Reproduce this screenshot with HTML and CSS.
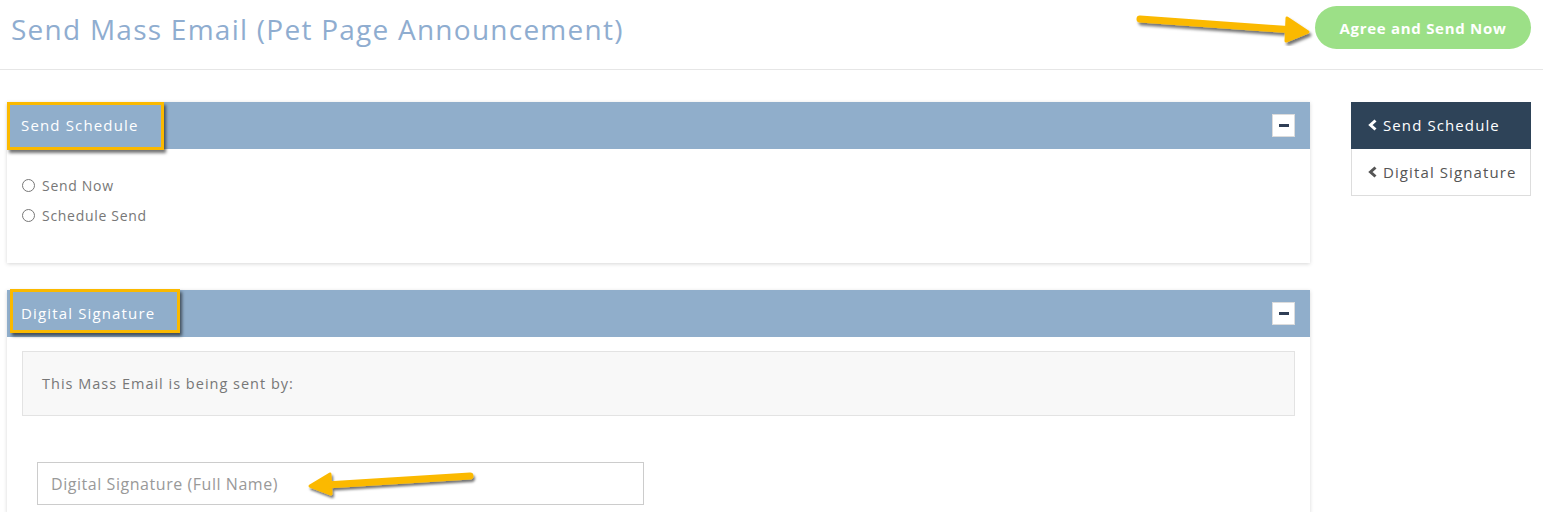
FILE: index.html
```html
<!DOCTYPE html>
<html>
<head>
<meta charset="utf-8">
<link rel="stylesheet" href="styles.css">
</head>
<body>
<header class="topbar">
  <h1 class="title">Send Mass Email (Pet Page Announcement)</h1>
  <button class="agree-btn">Agree and Send Now</button>
  <svg class="arrow arrow-top" width="190" height="40" viewBox="0 0 190 40">
    <defs>
      <filter id="sh1" x="-10%" y="-30%" width="130%" height="180%">
        <feDropShadow dx="2" dy="3" stdDeviation="1.5" flood-color="#000" flood-opacity="0.55"/>
      </filter>
    </defs>
    <g filter="url(#sh1)">
      <line x1="10" y1="13" x2="165" y2="24" stroke="#fbb900" stroke-width="7" stroke-linecap="round"/>
      <path d="M157 12 L178 26 L156 35 Z" fill="#fbb900" stroke="#fbb900" stroke-width="3" stroke-linejoin="round"/>
    </g>
  </svg>
</header>

<main class="layout">
  <section class="panels">
    <div class="panel">
      <div class="panel-head">
        <span class="panel-title">Send Schedule</span>
        <span class="collapse"><span class="dash"></span></span>
        <span class="hl hl-1"></span>
      </div>
      <div class="panel-body body-1">
        <label class="radio-row"><span class="radio"></span>Send Now</label>
        <label class="radio-row"><span class="radio"></span>Schedule Send</label>
      </div>
    </div>

    <div class="panel">
      <div class="panel-head">
        <span class="panel-title">Digital Signature</span>
        <span class="collapse"><span class="dash"></span></span>
        <span class="hl hl-2"></span>
      </div>
      <div class="panel-body body-2">
        <div class="well">This Mass Email is being sent by:</div>
        <div class="input-wrap">
          <div class="sig-input">Digital Signature (Full Name)</div>
          <svg class="arrow arrow-left" width="185" height="34" viewBox="0 0 185 34">
            <defs>
              <filter id="sh2" x="-10%" y="-30%" width="130%" height="180%">
                <feDropShadow dx="1.5" dy="2.5" stdDeviation="1.2" flood-color="#000" flood-opacity="0.55"/>
              </filter>
            </defs>
            <g filter="url(#sh2)">
              <line x1="170" y1="10" x2="26" y2="19" stroke="#fbb900" stroke-width="7" stroke-linecap="round"/>
              <path d="M30 8 L10 20 L31 28 Z" fill="#fbb900" stroke="#fbb900" stroke-width="3" stroke-linejoin="round"/>
            </g>
          </svg>
        </div>
      </div>
    </div>
  </section>

  <nav class="side-nav">
    <a class="nav-item active">
      <svg class="chev" width="10" height="12" viewBox="0 0 10 12"><polyline points="7.5,1.5 2.5,6 7.5,10.5" fill="none" stroke="currentColor" stroke-width="3" stroke-linejoin="miter"/></svg>Send Schedule</a>
    <a class="nav-item">
      <svg class="chev" width="10" height="12" viewBox="0 0 10 12"><polyline points="7.5,1.5 2.5,6 7.5,10.5" fill="none" stroke="currentColor" stroke-width="3" stroke-linejoin="miter"/></svg>Digital Signature</a>
  </nav>
</main>
</body>
</html>
```

FILE: styles.css
```css
* { box-sizing: border-box; }
html, body { margin: 0; padding: 0; background: #fff; }
body {
  font-family: "Open Sans", "Noto Sans", sans-serif;
  color: #666;
  height: 512px;
  overflow: hidden;
}

.topbar {
  position: relative;
  height: 70px;
  border-bottom: 1px solid #e6e6e6;
  display: flex;
  align-items: center;
  justify-content: space-between;
  padding: 0 12px 0 11px;
}
.title {
  margin: 0;
  font-size: 28px;
  font-weight: 500;
  color: #8fadd0;
  letter-spacing: 1.25px;
  margin-top: -12px;
}
.agree-btn {
  border: none;
  background: #9ce087;
  color: #fff;
  font-family: inherit;
  font-weight: 700;
  font-size: 15px;
  height: 43px;
  width: 216px;
  border-radius: 22px;
  margin-top: -14px;
  letter-spacing: 0.7px;
}
.arrow { position: absolute; pointer-events: none; }
.arrow-top { left: 1130px; top: 6px; }

.layout {
  display: flex;
  align-items: flex-start;
  padding: 32px 12px 0 7px;
  gap: 41px;
}
.panels {
  width: 1303px;
  flex: none;
  display: flex;
  flex-direction: column;
  gap: 27px;
}
.panel {
  background: #fff;
  box-shadow: 0 1px 4px rgba(0,0,0,0.16);
}
.panel-head {
  position: relative;
  height: 47px;
  background: #90aecb;
  display: flex;
  align-items: center;
  justify-content: space-between;
  padding: 0 15px 0 14px;
}
.panel-title {
  color: #fff;
  font-size: 15px;
  letter-spacing: 1.15px;
  margin-top: -2px;
}
.collapse {
  width: 23px;
  height: 23px;
  background: #fff;
  border: 1px solid #dcdcdc;
  display: flex;
  align-items: center;
  justify-content: center;
  margin-top: -1px;
}
.dash {
  width: 10px;
  height: 3px;
  background: #2f3e55;
}
.hl {
  position: absolute;
  border: 3px solid #fbb900;
  box-shadow: 2px 3px 3px rgba(0,0,0,0.55);
  pointer-events: none;
}
.hl-1 { left: 0; top: 0; width: 157px; height: 48px; }
.hl-2 { left: 3px; top: -1px; width: 170px; height: 44px; }

.body-1 {
  height: 114px;
  padding: 27px 15px 0 15px;
  display: flex;
  flex-direction: column;
  gap: 12px;
}
.radio-row {
  display: flex;
  align-items: center;
  font-size: 14px;
  color: #777;
  height: 18px;
  letter-spacing: 0.7px;
}
.radio {
  width: 13px;
  height: 13px;
  border: 1px solid #777;
  border-radius: 50%;
  margin-right: 7px;
  background: #fff;
}

.body-2 {
  padding: 14px 15px 10px 15px;
  height: 176px;
}
.well {
  height: 65px;
  background: #f8f8f8;
  border: 1px solid #e3e3e3;
  display: flex;
  align-items: center;
  padding: 0 19px;
  font-size: 14.5px;
  color: #777;
  letter-spacing: 1px;
}
.input-wrap {
  position: relative;
  margin: 46px 0 0 15px;
  width: 607px;
}
.sig-input {
  height: 43px;
  border: 1px solid #ccc;
  display: flex;
  align-items: center;
  padding: 0 13px;
  font-size: 16px;
  color: #999;
  letter-spacing: 0.55px;
}
.arrow-left { left: 263px; top: 4px; }

.side-nav {
  width: 180px;
  flex: none;
  display: flex;
  flex-direction: column;
}
.nav-item {
  height: 47px;
  display: flex;
  align-items: center;
  padding: 0 0 0 16px;
  font-size: 15px;
  color: #555;
  border: 1px solid #ddd;
  border-top: none;
  letter-spacing: 1.1px;
  white-space: nowrap;
}
.nav-item.active {
  background: #2e4358;
  color: #fff;
  border-color: #2e4358;
}
.chev {
  margin-right: 5px;
  flex: none;
}
```
